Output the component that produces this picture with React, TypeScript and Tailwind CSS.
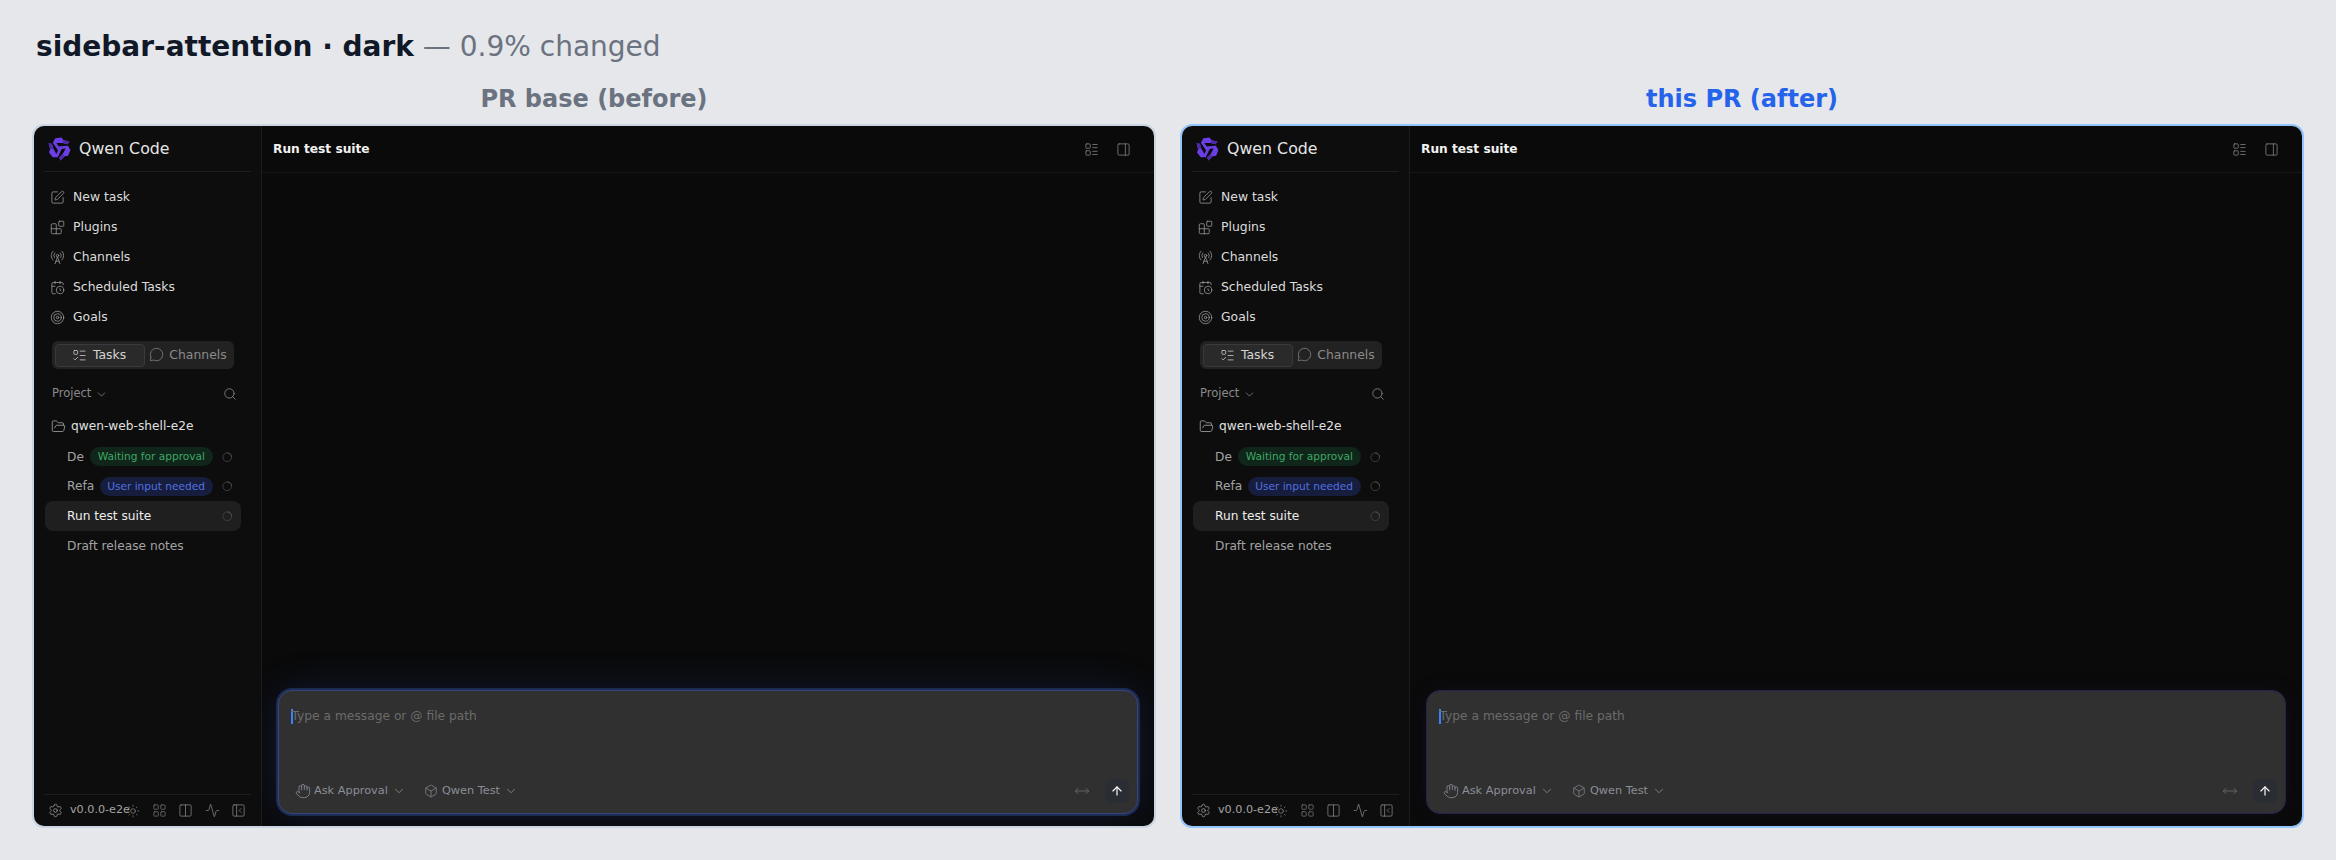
import {
  Activity,
  ArrowUp,
  Blocks,
  Box,
  CalendarClock,
  ChevronDown,
  Columns2,
  FolderOpen,
  Hand,
  LayoutGrid,
  LayoutList,
  ListTodo,
  MessageCircle,
  MoveHorizontal,
  PanelLeftClose,
  PanelRight,
  RadioTower,
  Search,
  Settings,
  SquarePen,
  Sun,
  Target,
} from "lucide-react";

const navItems = [
  { label: "New task", icon: SquarePen },
  { label: "Plugins", icon: Blocks },
  { label: "Channels", icon: RadioTower },
  { label: "Scheduled Tasks", icon: CalendarClock },
  { label: "Goals", icon: Target },
];

// Qwen pinwheel mark
function QwenLogo() {
  const arm = "M8 2.2 L13.8 1.4 L15.8 3.8 L21.6 5.4 L19.6 8 L15 6.8 L9 6.8 L12.6 12.2 L11.2 14.6 L5.6 6.4 Z";
  return (
    <svg viewBox="1 0 22 24" className="w-[23px] h-[25px] shrink-0">
      {[0, 120, 240].map((deg) => (
        <g key={deg} transform={`rotate(${deg} 12 12)`}>
          <path d={arm} fill="#6c3fe6" />
          <path d="M15.8 3.8 L21.6 5.4 L19.6 8 L15 6.8 Z" fill="#4d2aa6" />
        </g>
      ))}
    </svg>
  );
}

function Spinner() {
  return (
    <svg viewBox="0 0 12 12" className="w-[10.5px] h-[10.5px] shrink-0" fill="none">
      <circle cx="6" cy="6" r="5" stroke="#444444" strokeWidth="1" />
      <path d="M6 1 A5 5 0 0 1 11 6" stroke="#555555" strokeWidth="1" />
    </svg>
  );
}

function TaskRow({ title, badge, badgeClass, active, spinner }: {
  title: string;
  badge?: string;
  badgeClass?: string;
  active?: boolean;
  spinner?: boolean;
}) {
  return (
    <div className={`h-[29.7px] rounded-lg flex items-center pl-[22px] pr-[9px] ${active ? "bg-[#1f1f1f] text-[#ededed]" : "text-[#a3a3a3]"}`}>
      <span className="flex-1 min-w-0 overflow-hidden whitespace-nowrap text-[12.2px]">{title}</span>
      {badge && (
        <span className={`ml-1.5 mr-[9px] shrink-0 h-[19px] px-[7.5px] rounded-full flex items-center text-[10.6px] whitespace-nowrap ${badgeClass}`}>
          {badge}
        </span>
      )}
      {spinner && <Spinner />}
    </div>
  );
}

function Sidebar() {
  return (
    <aside className="w-[228px] shrink-0 h-full bg-[#0d0d0d] border-r border-[#1c1c1c] flex flex-col">
      <div className="mx-2.5 h-[46px] shrink-0 border-b border-[#1e1e1e] flex items-center gap-[8px] pl-[4px]">
        <QwenLogo />
        <span className="text-[15.8px] text-[#e5e5e5] pt-[1px]">Qwen Code</span>
      </div>

      <nav className="mt-[10.5px] flex flex-col">
        {navItems.map((item) => (
          <div key={item.label} className="h-[30px] flex items-center pl-[16px] gap-[8px] text-[12.4px] text-[#dcdcdc]">
            <item.icon size={15} strokeWidth={1.2} className="text-[#a3a3a3] shrink-0" />
            {item.label}
          </div>
        ))}
      </nav>

      <div className="mt-[8.5px] ml-[18px] w-[182px] h-[28px] bg-[#222222] rounded-md flex items-center p-[3px] text-[12.4px]">
        <div className="w-[90px] h-[23px] rounded border border-[#3a3a3a] bg-[#2a2a2a] flex items-center justify-center gap-[6px] pr-[2px] text-[#d4d4d4]">
          <ListTodo size={15} strokeWidth={1.2} />
          Tasks
        </div>
        <div className="flex-1 flex items-center justify-center gap-[5px] text-[#8a8a8a]">
          <MessageCircle size={15} strokeWidth={1.2} />
          Channels
        </div>
      </div>

      <div className="mt-[16px] h-[18px] pl-[18px] pr-[24px] flex items-center justify-between text-[#8a8a8a]">
        <span className="flex items-center gap-1 text-[11.5px]">
          Project
          <ChevronDown size={13} strokeWidth={1.4} />
        </span>
        <Search size={14} strokeWidth={1.4} />
      </div>

      <div className="mt-[13px] h-[20px] pl-[17px] flex items-center gap-[5px] text-[12.2px] text-[#e0e0e0]">
        <FolderOpen size={15} strokeWidth={1.2} className="text-[#b0b0b0]" />
        qwen-web-shell-e2e
      </div>

      <div className="mt-[6px] ml-[11px] mr-[20px] flex flex-col">
        <TaskRow title="Deploy to staging" badge="Waiting for approval" badgeClass="bg-[#10261a] text-[#3fa765]" spinner />
        <TaskRow title="Refactor auth" badge="User input needed" badgeClass="bg-[#161d3d] text-[#5470e0]" spinner />
        <TaskRow title="Run test suite" active spinner />
        <TaskRow title="Draft release notes" />
      </div>

      <div className="mt-auto mx-2.5 h-[32px] border-t border-[#1e1e1e] flex items-center pl-[4px] text-[#8f8f8f]">
        <Settings size={15} strokeWidth={1.2} className="text-[#a3a3a3] shrink-0" />
        <span className="ml-[7px] w-[56px] text-[11.2px] whitespace-nowrap text-[#a3a3a3]">v0.0.0-e2e</span>
        <Sun size={14} strokeWidth={1.2} className="text-[#8a8a8a] shrink-0" />
        <LayoutGrid size={15} strokeWidth={1.2} className="ml-[12px] text-[#777777] shrink-0" />
        <Columns2 size={15} strokeWidth={1.2} className="ml-[11px] text-[#8a8a8a] shrink-0" />
        <Activity size={15} strokeWidth={1.2} className="ml-[11.5px] text-[#8a8a8a] shrink-0" />
        <PanelLeftClose size={15} strokeWidth={1.2} className="ml-[11px] text-[#8a8a8a] shrink-0" />
      </div>
    </aside>
  );
}

function Composer({ after }: { after?: boolean }) {
  return (
    <div
      className={`h-[124px] rounded-[14px] bg-[#303030] flex flex-col justify-between pl-[12px] pr-[8px] pt-[17px] pb-[10px] ${
        after
          ? "border border-[#25234a] shadow-[0_0_24px_rgba(70,60,190,0.09)]"
          : "border border-[#34477f] shadow-[0_0_0_2px_#1d2a52,0_0_40px_rgba(50,80,210,0.2)]"
      }`}
    >
      <div className="flex items-center h-[16px]">
        <span className="w-[1.5px] h-[15px] bg-[#3b82f6]" />
        <span className="-ml-[1px] text-[12.25px] text-[#6b6b6b]">Type a message or @ file path</span>
      </div>
      <div className="flex items-center h-[24px] text-[11.3px] text-[#8b8e98]">
        <Hand size={16} strokeWidth={1.2} className="ml-[4px]" />
        <span className="ml-[3px]">Ask Approval</span>
        <ChevronDown size={14} strokeWidth={1.4} className="ml-[4px]" />
        <Box size={14} strokeWidth={1.2} className="ml-[18px]" />
        <span className="ml-[4px]">Qwen Test</span>
        <ChevronDown size={14} strokeWidth={1.4} className="ml-[4px]" />
        <MoveHorizontal size={16} strokeWidth={1.2} className="ml-auto text-[#6e6e6e]" />
        <div className="ml-[15px] w-[24px] h-[24px] rounded-md bg-[#2a2d33] flex items-center justify-center">
          <ArrowUp size={14} strokeWidth={2} className="text-white" />
        </div>
      </div>
    </div>
  );
}

function AppShot({ after }: { after?: boolean }) {
  return (
    <div className={`h-[704px] rounded-xl border-2 overflow-hidden flex ${after ? "border-[#93c5fd]" : "border-[#cbd5e1]"}`}>
      <Sidebar />
      <main className="flex-1 min-w-0 h-full bg-[#0a0a0a] flex flex-col overflow-hidden">
        <header className="h-[47px] shrink-0 border-b border-[#171717] flex items-center pl-[11px] pr-[23px]">
          <span className="text-[12.2px] font-bold text-[#f2f2f2]">Run test suite</span>
          <LayoutList size={15} strokeWidth={1.2} className="ml-auto text-[#8a8a8a]" />
          <PanelRight size={15} strokeWidth={1.2} className="ml-[17px] text-[#8a8a8a]" />
        </header>
        <div className="flex-1" />
        <div className="px-[16px] pb-[12px]">
          <Composer after={after} />
        </div>
      </main>
    </div>
  );
}

export default function App() {
  return (
    <div className="w-full h-screen bg-[#e5e7eb] px-8 pt-[29px] font-['DejaVu_Sans',sans-serif] overflow-hidden">
      <h1 className="ml-1 h-[36px] leading-[36px] text-[28px] text-[#6b7280]">
        <b className="text-[#111827]">sidebar-attention · dark</b> — 0.9% changed
      </h1>
      <div className="mt-[15px] grid grid-cols-2 gap-6">
        <div className="flex flex-col items-center">
          <h2 className="h-[32px] mb-[12px] leading-[32px] pt-[3px] text-[24px] font-bold text-[#6b7280]">PR base (before)</h2>
          <div className="w-full"><AppShot /></div>
        </div>
        <div className="flex flex-col items-center">
          <h2 className="h-[32px] mb-[12px] leading-[32px] pt-[3px] text-[24px] font-bold text-[#2563eb]">this PR (after)</h2>
          <div className="w-full"><AppShot after /></div>
        </div>
      </div>
    </div>
  );
}
